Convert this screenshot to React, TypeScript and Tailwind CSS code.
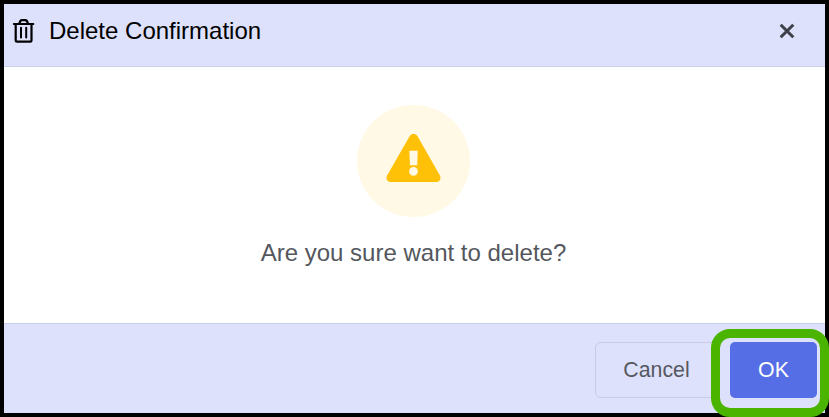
import React from 'react';

interface DeleteDialogProps {
  title: string;
  message: string;
}

const TrashIcon: React.FC = () => (
  <svg
    className="h-6 w-[23px] shrink-0"
    viewBox="0 0 23 24"
    fill="none"
    stroke="currentColor"
    strokeWidth={2.2}
    strokeLinecap="round"
    strokeLinejoin="round"
  >
    <path d="M1.9 5h19.4" />
    <path d="M7.5 4.8C7.5 2.3 8.5 1.2 10.1 1.2h3c1.6 0 2.6 1.1 2.6 3.6" />
    <path d="M3.7 5v16.3c0 .9.5 1.4 1.4 1.4h13c.9 0 1.4-.5 1.4-1.4V5" />
    <path d="M9 8.7v9.8M14.2 8.7v9.8" strokeWidth={2} />
  </svg>
);

const CloseIcon: React.FC = () => (
  <svg
    className="h-4 w-4"
    viewBox="0 0 16 16"
    fill="none"
    stroke="currentColor"
    strokeWidth={3}
    strokeLinecap="butt"
  >
    <path d="M1.7 1.7l12.6 12.6M14.3 1.7l-12.6 12.6" />
  </svg>
);

const WarningIcon: React.FC = () => (
  <svg className="h-12 w-[55px]" viewBox="0 0 56 48" preserveAspectRatio="none">
    <path
      d="M24.2 2.1C26 -.8 30.2 -.8 32 2.1L54.9 41.4C56.6 44.3 54.7 48 51.3 48H4.7C1.3 48-.6 44.3 1.1 41.4z"
      fill="#ffc107"
    />
    <path d="M23.8 16.8h8.5l-.5 14.4h-7.4z" fill="#fff9e6" />
    <circle cx="28" cy="37.4" r="4.4" fill="#fff9e6" />
  </svg>
);

const DeleteDialog: React.FC<DeleteDialogProps> = ({ title, message }) => {
  return (
    <div className="flex h-[417px] w-[829px] flex-col border-4 border-black bg-white font-['Liberation_Sans',Arial,sans-serif]">
      {/* Header */}
      <div className="flex h-[63px] shrink-0 items-center border-b border-[#ccd0e8] bg-[#dde1fb] pr-[30px] pb-2 pl-2 text-black">
        <TrashIcon />
        <h1 className="ml-3.5 text-2xl leading-none">{title}</h1>
        <button type="button" aria-label="Close" className="ml-auto text-[#3d3f49]">
          <CloseIcon />
        </button>
      </div>

      {/* Message */}
      <div className="flex flex-1 flex-col items-center pt-[38px] pr-0.5">
        <div className="flex h-28 w-[113px] items-center justify-center rounded-full bg-[#fff9e6] pb-[6px]">
          <WarningIcon />
        </div>
        <p className="mt-[22px] text-2xl leading-7 text-[#54575d]">{message}</p>
      </div>

      {/* Actions */}
      <div className="flex h-[90px] shrink-0 items-start justify-end gap-3 border-t border-[#c8cde8] bg-[#dde1fb] pt-[18px] pr-2 text-[21.3px]">
        <button
          type="button"
          className="h-14 w-[123px] rounded-md border border-[#c8cce3] pt-0.5 text-[#56585f]"
        >
          Cancel
        </button>
        <div className="relative">
          <button type="button" className="h-14 w-[87px] rounded-[5px] bg-[#556ee6] pt-0.5 text-white">
            OK
          </button>
          <div className="pointer-events-none absolute -top-[13px] -left-[19px] h-[88px] w-[118px] rounded-[19px] border-[9px] border-[#4bb400]" />
        </div>
      </div>
    </div>
  );
};

export default function App() {
  return <DeleteDialog title="Delete Confirmation" message="Are you sure want to delete?" />;
}
